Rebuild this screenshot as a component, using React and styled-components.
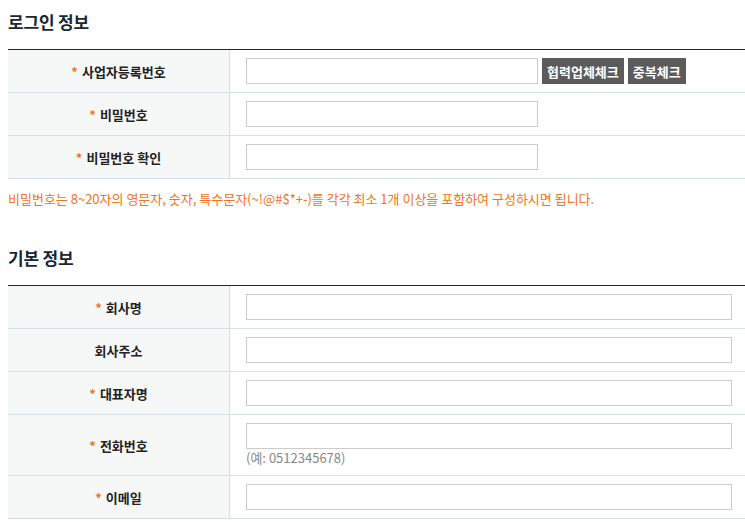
import React from 'react'
import styled, { createGlobalStyle } from 'styled-components'

const GlobalStyle = createGlobalStyle`
  html, body {
    margin: 0;
    padding: 0;
    background: #fff;
  }
  body {
    font-family: "Noto Sans CJK KR", "Noto Sans", sans-serif;
    color: #222;
  }
`

const Page = styled.div`
  padding: 0 0 0 8px;
`

const Title = styled.h2`
  margin: 0;
  padding-top: 10px;
  height: 39px;
  font-size: 17px;
  line-height: 24px;
  font-weight: 700;
  color: #1b2634;
  letter-spacing: -0.2px;
`

const Table = styled.div`
  border-top: 1px solid #1b2634;
`

const Row = styled.div`
  display: flex;
  border-bottom: 1px solid #d8dfe4;
`

const Label = styled.div`
  width: 221px;
  flex: none;
  display: flex;
  align-items: center;
  justify-content: center;
  background: #f6f8f8;
  border-right: 1px solid #d8dfe4;
  font-size: 13px;
  font-weight: 700;
  color: #222;
`

const Star = styled.span`
  color: #f37321;
  margin-right: 4px;
`

const Cell = styled.div`
  flex: 1;
  padding: 8px 13px 8px 16px;
`

const Line = styled.div`
  display: flex;
  align-items: center;
  gap: 3px;
`

const Input = styled.input`
  display: block;
  box-sizing: border-box;
  height: 26px;
  width: ${p => (p.$wide ? '100%' : '292px')};
  border: 1px solid #cccccc;
  margin: 0;
  padding: 0 6px;
  font-family: inherit;
  font-size: 13px;
  outline: none;
`

const Button = styled.button`
  display: block;
  height: 26px;
  margin: 0 0 0 1px;
  padding: 0 5px;
  border: 0;
  background: #5b5b5b;
  color: #fff;
  font-family: inherit;
  font-size: 13px;
  font-weight: 700;
  cursor: pointer;
`

const Help = styled.div`
  font-size: 13px;
  line-height: 18px;
  color: #888;
`

const Notice = styled.p`
  margin: 0 0 28px;
  padding-top: 10px;
  font-size: 13px;
  line-height: 19px;
  color: #f37321;
  letter-spacing: 0;
`

const Field = ({ label, required, children }) => (
  <Row>
    <Label>
      {required && <Star>*</Star>}
      {label}
    </Label>
    <Cell>{children}</Cell>
  </Row>
)

const App = () => {
  return (
    <Page>
      <GlobalStyle />
      <Title>로그인 정보</Title>
      <Table>
        <Field label="사업자등록번호" required>
          <Line>
            <Input type="text" />
            <Button>협력업체체크</Button>
            <Button>중복체크</Button>
          </Line>
        </Field>
        <Field label="비밀번호" required>
          <Input type="password" />
        </Field>
        <Field label="비밀번호 확인" required>
          <Input type="password" />
        </Field>
      </Table>
      <Notice>
        비밀번호는 8~20자의 영문자, 숫자, 특수문자(~!@#$*+-)를 각각 최소 1개 이상을 포함하여 구성하시면 됩니다.
      </Notice>
      <Title>기본 정보</Title>
      <Table>
        <Field label="회사명" required>
          <Input type="text" $wide />
        </Field>
        <Field label="회사주소">
          <Input type="text" $wide />
        </Field>
        <Field label="대표자명" required>
          <Input type="text" $wide />
        </Field>
        <Field label="전화번호" required>
          <Input type="text" $wide />
          <Help>(예: 0512345678)</Help>
        </Field>
        <Field label="이메일" required>
          <Input type="text" $wide />
        </Field>
      </Table>
    </Page>
  )
}

export default App
